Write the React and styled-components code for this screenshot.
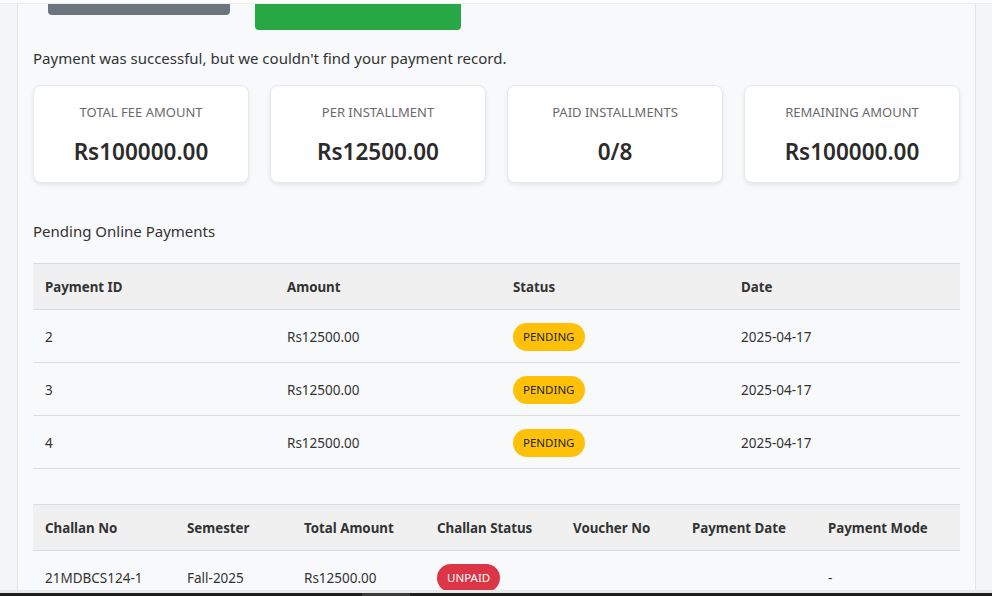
import React from 'react';
import styled, { createGlobalStyle } from 'styled-components';

const GlobalStyle = createGlobalStyle`
  html, body {
    margin: 0;
    padding: 0;
    background: #f4f5f6;
  }
  body {
    font-family: "Segoe UI", "Noto Sans", "Open Sans", sans-serif;
    color: #333;
  }
`;

const cards = [
  { label: 'Total Fee Amount', value: 'Rs100000.00' },
  { label: 'Per Installment', value: 'Rs12500.00' },
  { label: 'Paid Installments', value: '0/8' },
  { label: 'Remaining Amount', value: 'Rs100000.00' },
];

const pending = [
  { id: 2, amount: 'Rs12500.00', date: '2025-04-17' },
  { id: 3, amount: 'Rs12500.00', date: '2025-04-17' },
  { id: 4, amount: 'Rs12500.00', date: '2025-04-17' },
];

const pendingCols = [242, 226, 228, 231];
const challanCols = [142, 117, 133, 136, 119, 136, 144];

const App = () => {
  return (
    <Screen>
      <GlobalStyle />
      <TopStrip />
      <Middle>
        <Gutter side="left" />
        <Container>
          <ButtonRow>
            <Button variant="secondary" />
            <Button variant="success" />
          </ButtonRow>

          <Message>Payment was successful, but we couldn't find your payment record.</Message>

          <CardGrid>
            {cards.map((c) => (
              <Card key={c.label}>
                <CardLabel>{c.label}</CardLabel>
                <CardValue>{c.value}</CardValue>
              </Card>
            ))}
          </CardGrid>

          <SectionTitle>Pending Online Payments</SectionTitle>

          <Table>
            <colgroup>
              {pendingCols.map((w, i) => <col key={i} width={w} />)}
            </colgroup>
            <thead>
              <tr>
                <th>Payment ID</th>
                <th>Amount</th>
                <th>Status</th>
                <th>Date</th>
              </tr>
            </thead>
            <tbody>
              {pending.map((p) => (
                <tr key={p.id}>
                  <td>{p.id}</td>
                  <td>{p.amount}</td>
                  <td><Badge tone="warning">Pending</Badge></td>
                  <td>{p.date}</td>
                </tr>
              ))}
            </tbody>
          </Table>

          <Table spaced>
            <colgroup>
              {challanCols.map((w, i) => <col key={i} width={w} />)}
            </colgroup>
            <thead>
              <tr>
                <th>Challan No</th>
                <th>Semester</th>
                <th>Total Amount</th>
                <th>Challan Status</th>
                <th>Voucher No</th>
                <th>Payment Date</th>
                <th>Payment Mode</th>
              </tr>
            </thead>
            <tbody>
              <tr>
                <td>21MDBCS124-1</td>
                <td>Fall-2025</td>
                <td>Rs12500.00</td>
                <td><Badge tone="danger">Unpaid</Badge></td>
                <td></td>
                <td></td>
                <td>-</td>
              </tr>
            </tbody>
          </Table>
        </Container>
        <Gutter />
      </Middle>
      <BottomEdge />
      <ScrollTrack>
        <ScrollThumb />
      </ScrollTrack>
    </Screen>
  );
};

export default App;

const Screen = styled.div`
  height: 596px;
  display: flex;
  flex-direction: column;
  overflow: hidden;
`;

const TopStrip = styled.div`
  height: 3px;
  flex-shrink: 0;
  background: #fcfcfc;
  border-bottom: 1px solid #ececec;
`;

const Middle = styled.div`
  flex: 1;
  min-height: 0;
  display: flex;
  overflow: hidden;
`;

const Gutter = styled.div`
  width: ${(p) => (p.side === 'left' ? '17px' : '16px')};
  flex-shrink: 0;
  background: #f4f5f6;
`;

const Container = styled.div`
  width: 959px;
  flex-shrink: 0;
  background: #f8f9fa;
  border-left: 1px solid #e3e5e8;
  border-right: 1px solid #e3e5e8;
  padding: 0 15px;
  box-sizing: border-box;
  overflow: hidden;
`;

const ButtonRow = styled.div`
  display: flex;
  align-items: flex-start;
  gap: 25px;
  padding-left: 15px;
  height: 26px;
`;

const Button = styled.div`
  width: ${(p) => (p.variant === 'success' ? '206px' : '182px')};
  height: ${(p) => (p.variant === 'success' ? '26px' : '11px')};
  background: ${(p) => (p.variant === 'success' ? '#28a745' : '#6c757d')};
  border-radius: 0 0 4px 4px;
`;

const Message = styled.p`
  margin: 16px 0 15px;
  font-size: 15px;
  line-height: 24px;
`;

const CardGrid = styled.div`
  display: grid;
  grid-template-columns: repeat(4, 1fr);
  gap: 21px;
`;

const Card = styled.div`
  background: #fff;
  border: 1px solid #e6e8eb;
  border-radius: 8px;
  box-shadow: 0 2px 4px rgba(0, 0, 0, 0.08);
  padding: 16px 10px 14px;
  text-align: center;
`;

const CardLabel = styled.div`
  font-size: 13px;
  line-height: 20px;
  color: #6a6a6a;
  text-transform: uppercase;
  margin-bottom: 14px;
`;

const CardValue = styled.div`
  font-size: 22.5px;
  line-height: 32px;
  font-weight: 600;
  color: #2b2b2b;
`;

const SectionTitle = styled.h3`
  margin: 36px 0 20px;
  font-size: 15px;
  line-height: 24px;
  font-weight: 400;
  color: #333;
`;

const Table = styled.table`
  width: 100%;
  table-layout: fixed;
  border-collapse: collapse;
  margin-top: ${(p) => (p.spaced ? '35px' : '0')};
  font-size: 13.5px;
  line-height: 21px;

  th {
    background: #f0f0f0;
    text-align: left;
    font-weight: 700;
    font-size: 13.3px;
    color: #333;
    padding: 13px 12px 11px;
    border-top: 1px solid #dcdcdc;
    border-bottom: 1px solid #dcdcdc;
  }

  td {
    padding: 13px 12px 11px;
    color: #333;
    border-bottom: 1px solid #dedede;
    vertical-align: middle;
    height: 28px;
  }
`;

const Badge = styled.span`
  display: inline-block;
  padding: 4px 10px;
  border-radius: 14px;
  font-size: 11.5px;
  line-height: 20px;
  text-transform: uppercase;
  background: ${(p) => (p.tone === 'danger' ? '#dc3545' : '#ffc107')};
  color: ${(p) => (p.tone === 'danger' ? '#fff' : '#212529')};
`;

const BottomEdge = styled.div`
  height: 3px;
  flex-shrink: 0;
  background: #e9eaeb;
`;

const ScrollTrack = styled.div`
  height: 3px;
  flex-shrink: 0;
  background: #1f1f1f;
  padding-left: 362px;
`;

const ScrollThumb = styled.div`
  width: 48px;
  height: 100%;
  background: #3b3b3b;
`;
